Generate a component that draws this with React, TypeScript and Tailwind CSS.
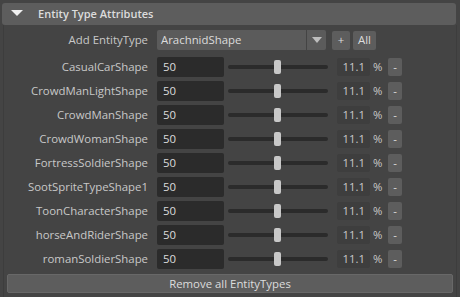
const shapes = [
  'CasualCarShape',
  'CrowdManLightShape',
  'CrowdManShape',
  'CrowdWomanShape',
  'FortressSoldierShape',
  'SootSpriteTypeShape1',
  'ToonCharacterShape',
  'horseAndRiderShape',
  'romanSoldierShape',
];

function Slider() {
  return (
    <div className="relative w-[100px] h-[20px] ml-[4px] flex items-center">
      <div className="w-full h-[4px] rounded-full bg-[#2b2b2b]" />
      <div className="absolute left-[46px] top-[3px] w-[7px] h-[14px] rounded-[2px] bg-[#c8c8c8]" />
    </div>
  );
}

function EntityRow({ name }: { name: string }) {
  return (
    <div className="flex items-center h-[20px]">
      <div className="w-[144px] text-right text-[#c8c8c8]">{name}</div>
      <div className="ml-[9px] w-[67px] h-[20px] rounded-[2px] bg-[#2b2b2b] text-[#dcdcdc] pl-[6px] leading-[20px]">
        50
      </div>
      <Slider />
      <div className="ml-[9px] w-[33px] h-[18px] rounded-[2px] bg-[#3e3e3e] text-[#c8c8c8] text-right pr-[5px] leading-[18px]">
        11.1
      </div>
      <div className="ml-[3px] w-[12px] text-[#c8c8c8]">%</div>
      <div className="ml-[3px] w-[14px] h-[18px] rounded-[2px] bg-[#5d5d5d] text-[#dcdcdc] flex items-center justify-center">
        -
      </div>
    </div>
  );
}

export default function App() {
  return (
    <div
      className="w-[460px] h-[297px] bg-[#444444] pt-[3px] px-[2px] text-[11.4px] overflow-hidden"
      style={{ fontFamily: '"Open Sans", "Liberation Sans", sans-serif' }}
    >
      <div className="h-[22px] rounded-[3px] bg-[#5d5d5d] flex items-center mr-[2px]">
        <svg width="12" height="8" viewBox="0 0 12 8" className="ml-[9px]">
          <polygon points="0,0 12,0 6,6" fill="#f0f0f0" />
        </svg>
        <span className="ml-[15px] text-[11px] font-semibold text-[#dcdcdc]">Entity Type Attributes</span>
      </div>

      <div className="mx-[1px] border-x border-[#3d3d3d] h-[272px] flex flex-col">
        <div className="flex items-center h-[20px] mt-[5px]">
          <div className="w-[144px] text-right text-[#c8c8c8]">Add EntityType</div>
          <div className="ml-[9px] w-[149px] h-[20px] rounded-l-[2px] bg-[#5b5b5b] text-[#dcdcdc] pl-[4px] leading-[20px]">
            ArachnidShape
          </div>
          <div className="ml-[1px] w-[19px] h-[20px] rounded-r-[2px] bg-[#5b5b5b] flex items-center justify-center">
            <svg width="10" height="6" viewBox="0 0 10 6">
              <polygon points="0,0 10,0 5,6" fill="#bdbdbd" />
            </svg>
          </div>
          <div className="ml-[6px] w-[18px] h-[19px] rounded-[2px] bg-[#5d5d5d] text-[#dcdcdc] flex items-center justify-center">
            +
          </div>
          <div className="ml-[3px] w-[23px] h-[19px] rounded-[2px] bg-[#5d5d5d] text-[#dcdcdc] flex items-center justify-center">
            All
          </div>
        </div>

        <div className="flex flex-col gap-[4px] mt-[7px]">
          {shapes.map((s) => (
            <EntityRow key={s} name={s} />
          ))}
        </div>

        <div className="mt-[5px] mx-[3px] h-[19px] rounded-[2px] bg-[#5d5d5d] border border-[#686868] text-[#dcdcdc] flex items-center justify-center">
          Remove all EntityTypes
        </div>
      </div>
    </div>
  );
}
